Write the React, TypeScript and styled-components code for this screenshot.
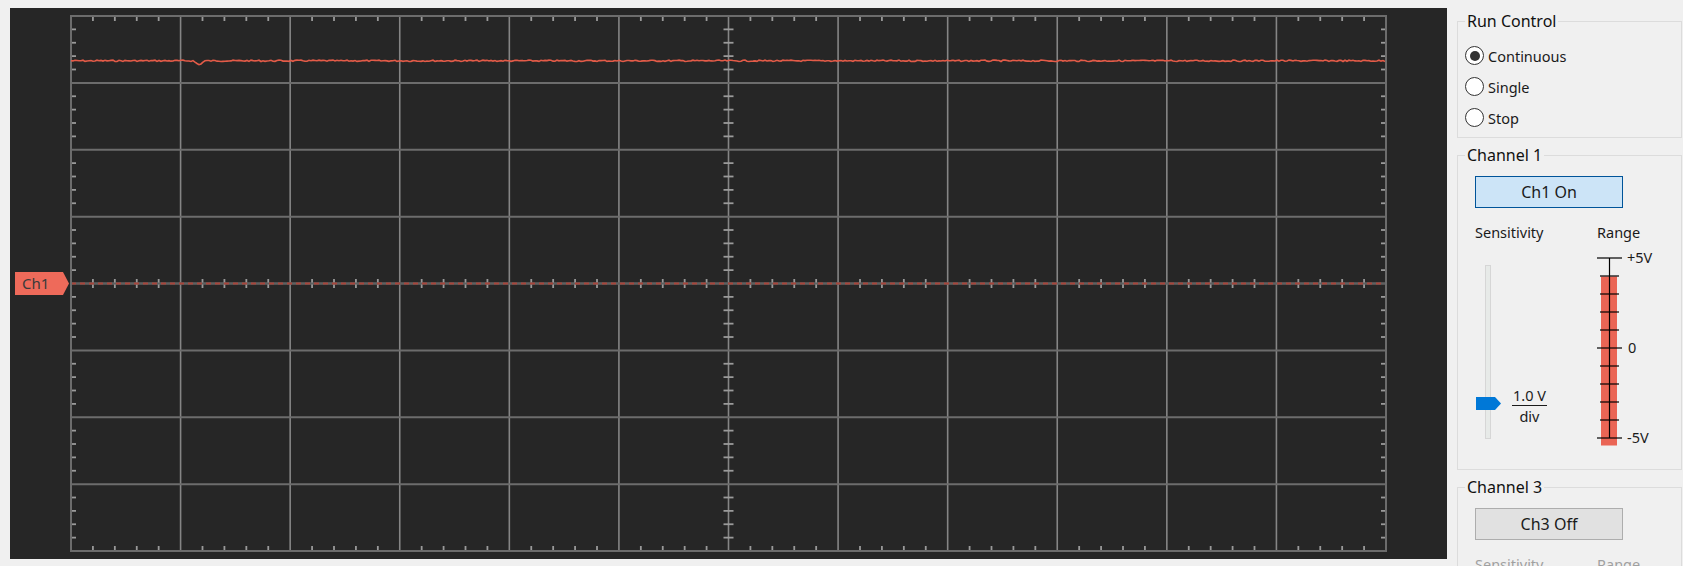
import React from 'react'
import styled, { createGlobalStyle } from 'styled-components'

const GlobalStyle = createGlobalStyle`
  html, body {
    margin: 0;
    padding: 0;
    background: #f0f0f0;
    font-family: 'Noto Sans', 'Open Sans', sans-serif;
    color: #1a1a1a;
  }
`

// scope grid geometry (inside the dark panel)
const GX0 = 61
const GX1 = 1376
const GY0 = 8
const GY1 = 543
const DX = (GX1 - GX0) / 12
const DY = (GY1 - GY0) / 8
const XC = GX0 + DX * 6
const YC = GY0 + DY * 4

const minorXs: number[] = []
for (let i = 0; i < 60; i++) if (i % 5 !== 0) minorXs.push(GX0 + (DX / 5) * i)
const minorYs: number[] = []
for (let i = 0; i < 40; i++) if (i % 5 !== 0) minorYs.push(GY0 + (DY / 5) * i)

// noisy trace, seeded so it's stable
const makeTrace = () => {
  let seed = 7
  const rnd = () => {
    seed = (seed * 9301 + 49297) % 233280
    return seed / 233280
  }
  const pts: string[] = []
  for (let x = GX0; x <= GX1; x += 2) {
    let y = 52.8 + (rnd() - 0.5) * 1.4
    const d = x - 189
    if (d > -6 && d < 6) y += 4 * (1 - Math.abs(d) / 6)
    pts.push(`${x},${y.toFixed(2)}`)
  }
  return 'M' + pts.join(' L')
}
const tracePath = makeTrace()

export default function App() {
  return (
    <>
      <GlobalStyle />
      <Root>
        <ScopeArea>
          <svg width='1437' height='551' viewBox='0 0 1437 551'>
            {/* inner grid */}
            {Array.from({ length: 11 }, (_, i) => (
              <line key={'v' + i} x1={GX0 + DX * (i + 1)} x2={GX0 + DX * (i + 1)} y1={GY0} y2={GY1} stroke='#858585' strokeWidth='1.6' />
            ))}
            {Array.from({ length: 7 }, (_, i) => (
              <line key={'h' + i} x1={GX0} x2={GX1} y1={GY0 + DY * (i + 1)} y2={GY0 + DY * (i + 1)} stroke='#6c6c6c' strokeWidth='2' />
            ))}
            {/* ticks */}
            <g stroke='#9a9a9a' strokeWidth='1.8'>
              {minorXs.map((x) => (
                <g key={'tx' + x}>
                  <line x1={x} x2={x} y1={GY0} y2={GY0 + 5} />
                  <line x1={x} x2={x} y1={GY1 - 5} y2={GY1} />
                  <line x1={x} x2={x} y1={YC - 4.5} y2={YC + 4.5} />
                </g>
              ))}
              {minorYs.map((y) => (
                <g key={'ty' + y}>
                  <line x1={GX0} x2={GX0 + 5} y1={y} y2={y} />
                  <line x1={GX1 - 5} x2={GX1} y1={y} y2={y} />
                  <line x1={XC - 5} x2={XC + 5} y1={y} y2={y} />
                </g>
              ))}
            </g>
            {/* channel 1 zero line */}
            <line x1={GX0} x2={GX1} y1={YC} y2={YC} stroke='#5f5f5f' strokeWidth='2' />
            <line x1={GX0} x2={GX1} y1={YC} y2={YC} stroke='#a8453b' strokeWidth='2' strokeDasharray='5 4' />
            <rect x={GX0} y={GY0} width={GX1 - GX0} height={GY1 - GY0} fill='none' stroke='#6c6c6c' strokeWidth='2' />
            {/* trace */}
            <path d={tracePath} fill='none' stroke='#e35b48' strokeWidth='1.6' />
            {/* ch1 marker */}
            <polygon points={`5,${YC - 11.5} 53,${YC - 11.5} 59,${YC} 53,${YC + 11.5} 5,${YC + 11.5}`} fill='#ee6a5a' />
            <text x='12' y={YC + 5.5} fontFamily='Noto Sans, sans-serif' fontSize='15' fill='#3a3a3a'>
              Ch1
            </text>
          </svg>
        </ScopeArea>

        <Side>
          <Group $height={127}>
            <Legend>Run Control</Legend>
            <RadioList>
              <RadioRow>
                <RadioCircle $checked />
                Continuous
              </RadioRow>
              <RadioRow>
                <RadioCircle />
                Single
              </RadioRow>
              <RadioRow>
                <RadioCircle />
                Stop
              </RadioRow>
            </RadioList>
          </Group>

          <Group $height={325}>
            <Legend>Channel 1</Legend>
            <ChannelBody>
              <ToggleButton $on>Ch1 On</ToggleButton>
              <Columns>
                <Column>
                  <ColLabel>Sensitivity</ColLabel>
                  <Slider>
                    <Track />
                    <Thumb>
                      <svg width='25' height='13' viewBox='0 0 25 13'>
                        <polygon points='0,0 19,0 25,6.5 19,13 0,13' fill='#0078d7' />
                      </svg>
                    </Thumb>
                    <Fraction>
                      <Num>1.0 V</Num>
                      <Den>div</Den>
                    </Fraction>
                  </Slider>
                </Column>
                <Column>
                  <ColLabel>Range</ColLabel>
                  <RangeScale />
                </Column>
              </Columns>
            </ChannelBody>
          </Group>

          <Group $height={120}>
            <Legend>Channel 3</Legend>
            <ChannelBody>
              <ToggleButton>Ch3 Off</ToggleButton>
              <Columns>
                <Column>
                  <ColLabel $disabled>Sensitivity</ColLabel>
                </Column>
                <Column>
                  <ColLabel $disabled>Range</ColLabel>
                </Column>
              </Columns>
            </ChannelBody>
          </Group>
        </Side>
      </Root>
    </>
  )
}

function RangeScale() {
  const ticks = Array.from({ length: 11 }, (_, i) => 13 + i * 18)
  return (
    <svg width='72' height='210' viewBox='0 0 72 210' style={{ display: 'block', marginTop: 3 }}>
      <rect x='4' y='31.5' width='16' height='169' fill='#ea6555' />
      <line x1='12.5' x2='12.5' y1='13' y2='193' stroke='#000' strokeWidth='1.2' />
      {ticks.map((y, i) => {
        const wide = i === 0 || i === 5 || i === 10
        return <line key={y} x1={wide ? 0 : 3} x2={wide ? 25 : 22} y1={y} y2={y} stroke='#000' strokeWidth='1.2' />
      })}
      <g fontFamily='Noto Sans, sans-serif' fontSize='14.5' fill='#1a1a1a'>
        <text x='30' y='18'>+5V</text>
        <text x='31' y='108'>0</text>
        <text x='30' y='198'>-5V</text>
      </g>
    </svg>
  )
}

type GroupProps = { $height: number }
type OnProps = { $on?: boolean }
type CheckProps = { $checked?: boolean }
type DisabledProps = { $disabled?: boolean }

const Root = styled.div`
  display: flex;
  height: 566px;
  overflow: hidden;
`

const ScopeArea = styled.div`
  flex: 0 0 1437px;
  height: 551px;
  margin: 8px 0 0 10px;
  background: #262626;
  svg {
    display: block;
  }
`

const Side = styled.div`
  flex: 1;
  min-width: 0;
  display: flex;
  flex-direction: column;
  gap: 7px;
  padding: 11px 1px 0 10px;
`

const Group = styled.fieldset<GroupProps>`
  margin: 0;
  padding: 0;
  min-width: 0;
  flex: 0 0 auto;
  height: ${(p) => p.$height}px;
  box-sizing: border-box;
  border: 1px solid #dcdcdc;
`

const Legend = styled.legend`
  margin-left: 7px;
  padding: 0 2px;
  font-size: 16px;
  line-height: 20px;
  color: #111;
`

const RadioList = styled.div`
  display: flex;
  flex-direction: column;
  padding: 9px 0 0 7px;
`

const RadioRow = styled.div`
  display: flex;
  align-items: center;
  gap: 4px;
  height: 31px;
  font-size: 14.5px;
`

const RadioCircle = styled.span<CheckProps>`
  width: 19px;
  height: 19px;
  box-sizing: border-box;
  border: 1px solid #333;
  border-radius: 50%;
  background: #fff;
  display: flex;
  align-items: center;
  justify-content: center;
  &::after {
    content: '';
    width: 10px;
    height: 10px;
    border-radius: 50%;
    background: #333;
    display: ${(p) => (p.$checked ? 'block' : 'none')};
  }
`

const ChannelBody = styled.div`
  padding: 11px 0 0 17px;
`

const ToggleButton = styled.div<OnProps>`
  width: 148px;
  height: 32px;
  box-sizing: border-box;
  display: flex;
  align-items: center;
  justify-content: center;
  font-size: 16px;
  background: ${(p) => (p.$on ? '#cce4f7' : '#e1e1e1')};
  border: 1px solid ${(p) => (p.$on ? '#005499' : '#adadad')};
`

const Columns = styled.div`
  display: flex;
  margin-top: 14px;
`

const Column = styled.div`
  display: flex;
  flex-direction: column;
  &:first-child {
    width: 122px;
  }
`

const ColLabel = styled.div<DisabledProps>`
  font-size: 14.5px;
  line-height: 20px;
  color: ${(p) => (p.$disabled ? '#a0a0a0' : '#1a1a1a')};
`

const Slider = styled.div`
  position: relative;
  height: 200px;
  margin-top: 3px;
`

const Track = styled.div`
  position: absolute;
  left: 10px;
  top: 20px;
  width: 6px;
  height: 174px;
  box-sizing: border-box;
  background: #e7eae8;
  border: 1px solid #d6d6d6;
`

const Thumb = styled.div`
  position: absolute;
  left: 1px;
  top: 152px;
  svg {
    display: block;
  }
`

const Fraction = styled.div`
  position: absolute;
  left: 37px;
  top: 141px;
  display: flex;
  flex-direction: column;
  align-items: center;
  font-size: 14.5px;
  line-height: 20px;
`

const Num = styled.span`
  padding: 0 1px;
  border-bottom: 1px solid #1a1a1a;
  line-height: 19px;
`

const Den = styled.span`
  line-height: 20px;
`
